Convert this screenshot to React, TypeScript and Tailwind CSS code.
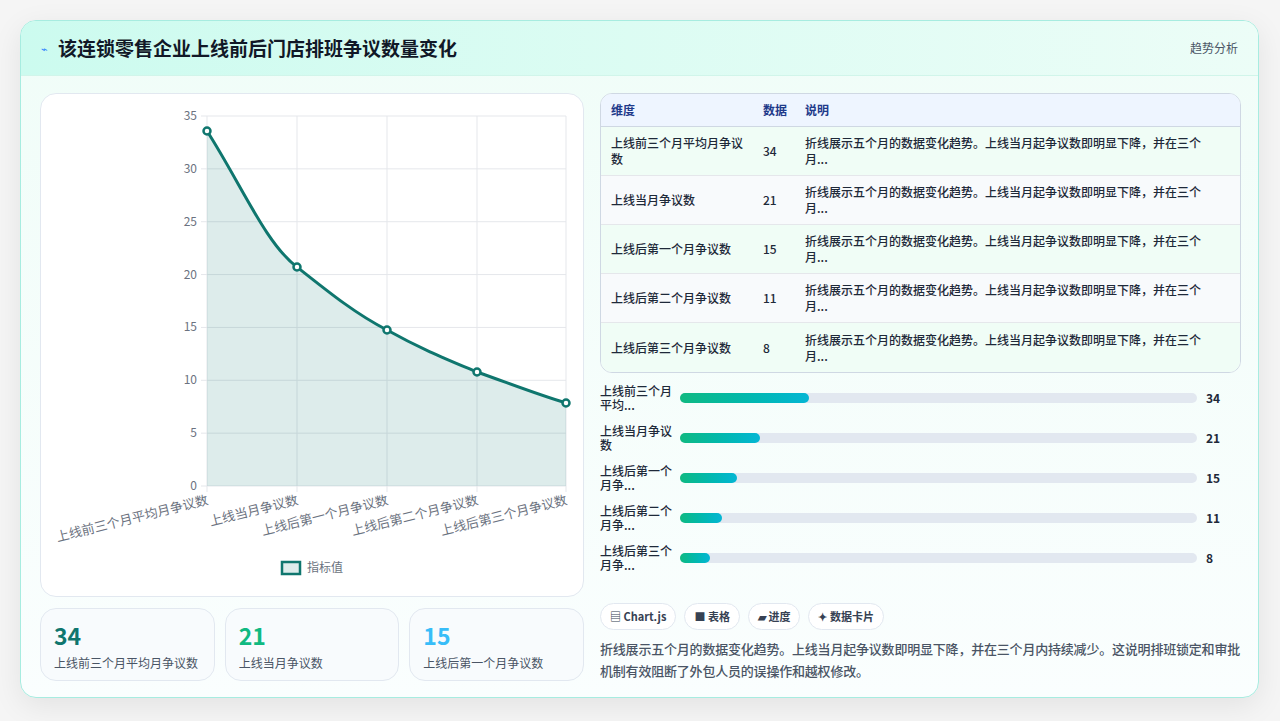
import React from 'react';

const ROWS = [
  { name: '上线前三个月平均月争议数', v: 34, short: '上线前三个月平均...' },
  { name: '上线当月争议数', v: 21, short: '上线当月争议数' },
  { name: '上线后第一个月争议数', v: 15, short: '上线后第一个月争...' },
  { name: '上线后第二个月争议数', v: 11, short: '上线后第二个月争...' },
  { name: '上线后第三个月争议数', v: 8, short: '上线后第三个月争...' },
];
const DESC = '折线展示五个月的数据变化趋势。上线当月起争议数即明显下降，并在三个月...';
const FONT = { fontFamily: '"Noto Sans CJK SC", "Noto Sans", sans-serif' };

function Chart() {
  const xs = [166, 256, 346, 436, 525];
  const pts = [[166, 37], [256, 173], [346, 236], [436, 278], [525, 309]];
  const line = 'M166,37 C200,90 225,150 256,173 C290,200 315,220 346,236 C380,255 405,265 436,278 C470,290 495,300 525,309';
  const ticks = [0, 5, 10, 15, 20, 25, 30, 35];
  return (
    <svg width="544" height="503" className="block">
      {ticks.map((t) => {
        const y = 392 - (t / 35) * 370;
        return (
          <g key={t}>
            <line x1="160" x2="525" y1={y} y2={y} stroke="#e5e7eb" />
            <text x="156" y={y + 4} textAnchor="end" fontSize="12" fill="#6b7280">{t}</text>
          </g>
        );
      })}
      {xs.map((x) => (
        <line key={x} x1={x} x2={x} y1="22" y2="398" stroke="#e5e7eb" />
      ))}
      <path d={line + ' L525,392 L166,392 Z'} fill="#0f766e" fillOpacity="0.14" />
      <path d={line} fill="none" stroke="#0f766e" strokeWidth="3" />
      {pts.map(([x, y]) => (
        <circle key={x} cx={x} cy={y} r="3.5" fill="#fff" stroke="#0f766e" strokeWidth="2.5" />
      ))}
      {ROWS.map((r, i) => (
        <text key={r.name} x={xs[i] + 2} y="410" textAnchor="end" fontSize="13" fill="#6b7280"
          transform={`rotate(-14 ${xs[i] + 2} 410)`}>{r.name}</text>
      ))}
      <rect x="241" y="468" width="18" height="12" fill="#0f766e" fillOpacity="0.14" stroke="#0f766e" strokeWidth="2.5" />
      <text x="266" y="478" fontSize="12" fill="#6b7280">指标值</text>
    </svg>
  );
}

export default function App() {
  return (
    <div className="w-[1280px] h-[721px] bg-[#f5f5f5] pt-5 px-5" style={FONT}>
      <div className="w-[1239px] h-[678px] rounded-2xl border border-[#a7ece0] bg-gradient-to-b from-[#f0fdf8] to-[#fafefe] shadow-[0_8px_30px_rgba(0,0,0,0.08)] overflow-hidden">
        <div className="h-[55px] flex items-center justify-between px-5 bg-gradient-to-r from-[#ccfbef] to-[#ecfdf7] border-b border-[#d1f5ea]">
          <div className="flex items-center gap-2.5">
            <span className="text-[11px] text-blue-500">⌁</span>
            <h1 className="text-[19px] font-bold text-[#111827]">该连锁零售企业上线前后门店排班争议数量变化</h1>
          </div>
          <span className="text-xs text-gray-600">趋势分析</span>
        </div>
        <div className="flex gap-4 px-[19px] pt-[17px]">
          <div className="w-[544px] flex flex-col gap-[11px]">
            <div className="h-[504px] rounded-2xl bg-white border border-[#e2e8f0]">
              <Chart />
            </div>
            <div className="grid grid-cols-3 gap-[10px]">
              {[['34', 'text-[#0f766e]'], ['21', 'text-[#10b981]'], ['15', 'text-[#38bdf8]']].map(([v, c], i) => (
                <div key={v} className="h-[73px] rounded-2xl bg-[#f8fbfd] border border-[#e2e8f0] px-[13px] pt-[12px]">
                  <div className={`text-[23px] font-bold leading-7 ${c}`}>{v}</div>
                  <div className="text-xs text-gray-600 mt-1.5">{ROWS[i].name}</div>
                </div>
              ))}
            </div>
          </div>
          <div className="w-[641px] flex flex-col">
            <div className="rounded-xl border border-[#cfd8e3] overflow-hidden bg-white">
              <div className="h-[33px] flex items-center bg-[#eef5ff] border-b border-[#cfd8e3] text-xs font-semibold text-[#1e3a8a]">
                <div className="w-[162px] pl-[10px]">维度</div>
                <div className="w-[42px]">数据</div>
                <div>说明</div>
              </div>
              {ROWS.map((r, i) => (
                <div key={r.name} className={`h-[49px] flex items-center text-xs font-medium text-gray-800 ${i % 2 ? 'bg-[#f8fafc]' : 'bg-[#f0fdf6]'} ${i < 4 ? 'border-b border-[#e5e7eb]' : ''}`}>
                  <div className="w-[162px] pl-[10px] pr-3 leading-4">{r.name}</div>
                  <div className="w-[42px]">{r.v}</div>
                  <div className="flex-1 pr-6 leading-4">{DESC}</div>
                </div>
              ))}
            </div>
            <div className="flex flex-col gap-[12px] mt-[11px]">
              {ROWS.map((r) => (
                <div key={r.name} className="h-[28px] flex items-center text-xs font-medium text-gray-800">
                  <div className="w-[80px] leading-[14px] pr-2">{r.short}</div>
                  <div className="w-[517px] h-[10px] rounded-full bg-[#e2e8f0]">
                    <div className="h-full rounded-full bg-gradient-to-r from-[#10b981] to-[#06b6d4]" style={{ width: `${(r.v / 136) * 100}%` }} />
                  </div>
                  <div className="ml-[9px] font-bold">{r.v}</div>
                </div>
              ))}
            </div>
            <div className="flex gap-2 mt-[31px]">
              {['▤ Chart.js', '■ 表格', '▰ 进度', '✦ 数据卡片'].map((c) => (
                <span key={c} className="h-[27px] px-[9px] flex items-center rounded-full bg-white border border-[#e2e8f0] text-[11px] font-semibold text-gray-700">{c}</span>
              ))}
            </div>
            <p className="mt-[8px] w-[650px] text-[13px] tracking-[-0.2px] leading-[22px] text-gray-600 font-medium">
              折线展示五个月的数据变化趋势。上线当月起争议数即明显下降，并在三个月内持续减少。这说明排班锁定和审批机制有效阻断了外包人员的误操作和越权修改。
            </p>
          </div>
        </div>
      </div>
    </div>
  );
}
